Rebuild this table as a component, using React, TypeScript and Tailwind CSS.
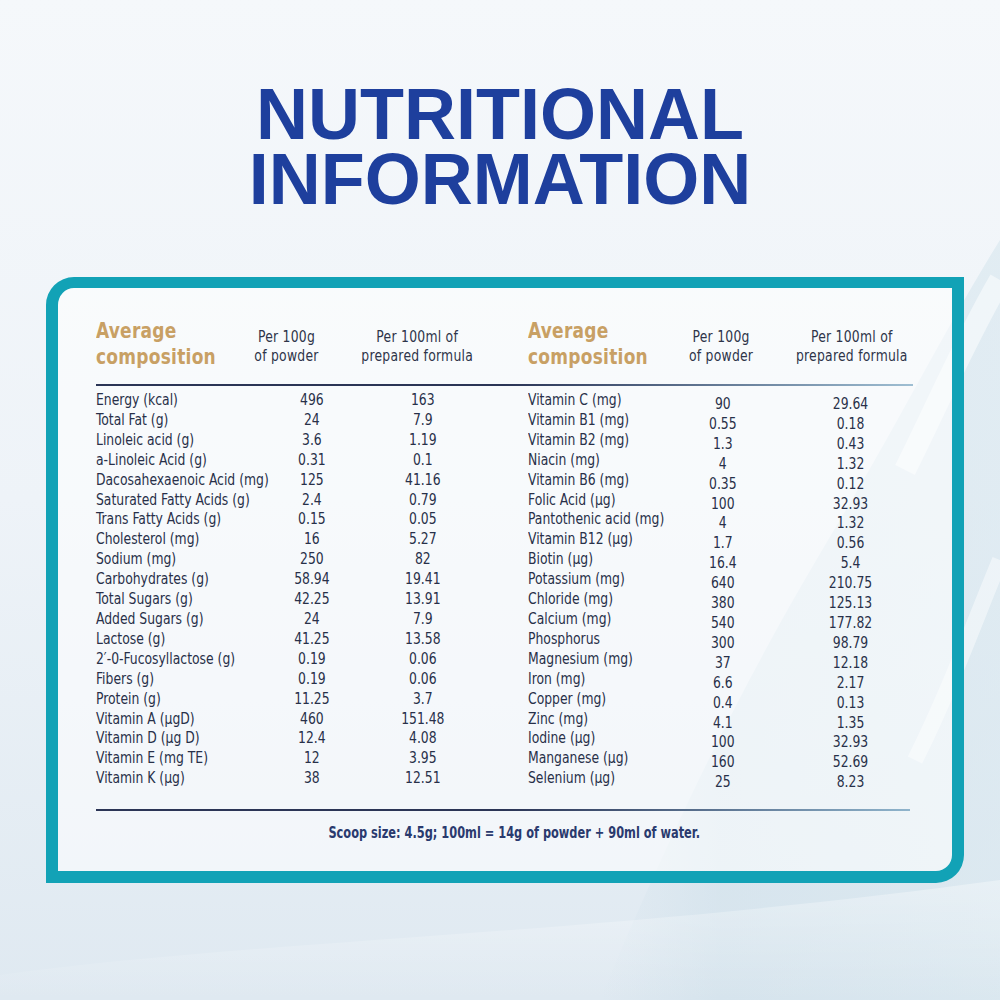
import React from 'react';

const cond = { fontFamily: "'DejaVu Sans Condensed', 'Liberation Sans', sans-serif" };

const leftRows = [
  ['Energy (kcal)', '496', '163'],
  ['Total Fat (g)', '24', '7.9'],
  ['Linoleic acid (g)', '3.6', '1.19'],
  ['a-Linoleic Acid (g)', '0.31', '0.1'],
  ['Dacosahexaenoic Acid (mg)', '125', '41.16'],
  ['Saturated Fatty Acids (g)', '2.4', '0.79'],
  ['Trans Fatty Acids (g)', '0.15', '0.05'],
  ['Cholesterol (mg)', '16', '5.27'],
  ['Sodium (mg)', '250', '82'],
  ['Carbohydrates (g)', '58.94', '19.41'],
  ['Total Sugars (g)', '42.25', '13.91'],
  ['Added Sugars (g)', '24', '7.9'],
  ['Lactose (g)', '41.25', '13.58'],
  ['2′-0-Fucosyllactose (g)', '0.19', '0.06'],
  ['Fibers (g)', '0.19', '0.06'],
  ['Protein (g)', '11.25', '3.7'],
  ['Vitamin A (µgD)', '460', '151.48'],
  ['Vitamin D (µg D)', '12.4', '4.08'],
  ['Vitamin E (mg TE)', '12', '3.95'],
  ['Vitamin K (µg)', '38', '12.51'],
];

const rightRows = [
  ['Vitamin C (mg)', '90', '29.64'],
  ['Vitamin B1 (mg)', '0.55', '0.18'],
  ['Vitamin B2 (mg)', '1.3', '0.43'],
  ['Niacin (mg)', '4', '1.32'],
  ['Vitamin B6 (mg)', '0.35', '0.12'],
  ['Folic Acid (µg)', '100', '32.93'],
  ['Pantothenic acid (mg)', '4', '1.32'],
  ['Vitamin B12 (µg)', '1.7', '0.56'],
  ['Biotin (µg)', '16.4', '5.4'],
  ['Potassium (mg)', '640', '210.75'],
  ['Chloride (mg)', '380', '125.13'],
  ['Calcium (mg)', '540', '177.82'],
  ['Phosphorus', '300', '98.79'],
  ['Magnesium (mg)', '37', '12.18'],
  ['Iron (mg)', '6.6', '2.17'],
  ['Copper (mg)', '0.4', '0.13'],
  ['Zinc (mg)', '4.1', '1.35'],
  ['Iodine (µg)', '100', '32.93'],
  ['Manganese (µg)', '160', '52.69'],
  ['Selenium (µg)', '25', '8.23'],
];

// no narrow DIN-like face installed, so the tables are squeezed horizontally
const TableHead = ({ cols }: { cols: string }) => (
  <div className={`grid ${cols} items-center origin-left scale-x-[0.86]`}>
    <div className="text-[22px] leading-[26px] font-bold tracking-[0.3px] text-[#c8a064]">
      Average
      <br />
      composition
    </div>
    <div className="text-center text-[16px] leading-[19px] tracking-[0.3px] text-[#2e3449] mt-[4px]">
      Per 100g
      <br />
      of powder
    </div>
    <div className="text-center text-[16px] leading-[19px] tracking-[0.3px] text-[#2e3449] mt-[4px]">
      Per 100ml of
      <br />
      prepared formula
    </div>
  </div>
);

const TableBody = ({ rows, cols, shift }: { rows: string[][]; cols: string; shift?: boolean }) => (
  <div className={`grid ${cols} origin-left scale-x-[0.86] text-[16px] leading-[19.9px] text-[#283049]`}>
    <div className="flex flex-col">
      {rows.map((r) => (
        <div key={r[0]} className="whitespace-nowrap">{r[0]}</div>
      ))}
    </div>
    <div className={`flex flex-col items-center ${shift ? 'pt-[4px]' : ''}`}>
      {rows.map((r, i) => (
        <div key={i}>{r[1]}</div>
      ))}
    </div>
    <div className={`flex flex-col items-center ${shift ? 'pt-[4px]' : ''}`}>
      {rows.map((r, i) => (
        <div key={i}>{r[2]}</div>
      ))}
    </div>
  </div>
);

const Backdrop = () => (
  <svg className="absolute inset-0 w-full h-full" viewBox="0 0 1000 1000" preserveAspectRatio="none">
    <defs>
      <linearGradient id="sw" x1="0" y1="0" x2="0" y2="1">
        <stop offset="0" stopColor="#ffffff" stopOpacity="0.8" />
        <stop offset="1" stopColor="#ffffff" stopOpacity="0" />
      </linearGradient>
      <linearGradient id="band" x1="0" y1="0" x2="1" y2="0">
        <stop offset="0" stopColor="#cfe0ea" stopOpacity="0" />
        <stop offset="0.3" stopColor="#cfe0ea" stopOpacity="0.8" />
        <stop offset="1" stopColor="#d8e7ef" stopOpacity="0.9" />
      </linearGradient>
    </defs>
    <path d="M1000 240 C 950 320, 900 420, 840 520 C 780 620, 700 760, 600 1000 L 1000 1000 Z" fill="url(#band)" opacity="0.7" />
    <path d="M1000 280 C 965 340, 940 400, 905 470" stroke="#ffffff" strokeWidth="22" fill="none" opacity="0.5" />
    <path d="M1000 560 C 975 620, 950 690, 915 760" stroke="#ffffff" strokeWidth="16" fill="none" opacity="0.45" />
    <path d="M0 975 C 250 940, 600 935, 1000 880 L 1000 1000 L 0 1000 Z" fill="url(#sw)" opacity="0.45" />
  </svg>
);

export default function App() {
  return (
    <div className="relative w-[1000px] h-[1000px] overflow-hidden bg-gradient-to-b from-[#f5f8fb] via-[#eef3f8] to-[#dfe9f1]">
      <Backdrop />
      <div className="relative pt-[82px]">
        <h1
          className="text-center text-[72px] leading-[65px] font-bold text-[#1e3f9d]"
          style={{ fontFamily: "'Liberation Sans', Arial, sans-serif" }}
        >
          NUTRITIONAL
          <br />
          INFORMATION
        </h1>

        <div
          className="ml-[46px] mt-[65px] w-[918px] h-[606px] border-[12px] border-t-[11px] border-[#12a2b6] rounded-tl-[28px] rounded-br-[28px] bg-white/55 pt-[30px] pl-[38px]"
          style={cond}
        >
          <div className="flex">
            <div className="w-[432px] shrink-0">
              <TableHead cols="grid-cols-[174px_95px_209px]" />
            </div>
            <div className="shrink-0">
              <TableHead cols="grid-cols-[177px_95px_209px]" />
            </div>
          </div>

          <div className="mt-[14px] w-[817px] h-[2px] bg-gradient-to-r from-[#2b3556] via-[#2b3556] to-[#9fbfd3]" />

          <div className="flex mt-[4px]">
            <div className="w-[432px] shrink-0">
              <TableBody rows={leftRows} cols="grid-cols-[209px_84px_174px]" />
            </div>
            <div className="shrink-0">
              <TableBody rows={rightRows} cols="grid-cols-[186px_81px_216px]" shift />
            </div>
          </div>

          <div className="mt-[17px] w-[814px] h-[2px] bg-gradient-to-r from-[#2b3556] via-[#2b3556] to-[#8fb4cc]" />

          <div className="w-[836px] mt-[12px] flex justify-center">
            <span className="inline-block whitespace-nowrap scale-x-[0.79] text-[16px] leading-[20px] font-bold text-[#2a3a6e]">
              Scoop size: 4.5g; 100ml = 14g of powder + 90ml of water.
            </span>
          </div>
        </div>
      </div>
    </div>
  );
}
